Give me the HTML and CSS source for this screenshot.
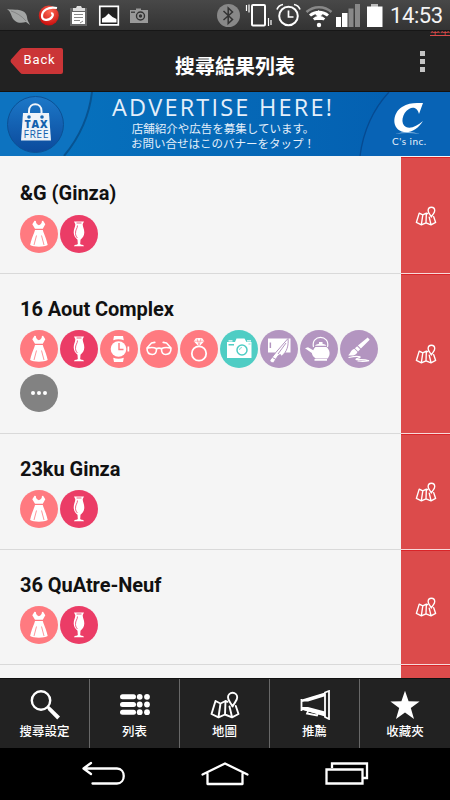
FILE: index.html
```html
<!DOCTYPE html>
<html lang="zh-Hant">
<head>
    <meta charset="UTF-8">
    <meta name="viewport" content="width=device-width, initial-scale=1.0">
    <title>搜尋結果列表</title>
    <link rel="stylesheet" href="styles.css">
</head>
<body>
    <svg class="sprite" xmlns="http://www.w3.org/2000/svg">
        <defs>
            <linearGradient id="bag-shade" x1="0" y1="0" x2="0" y2="1">
                <stop offset="0" stop-color="#1c78c8"/>
                <stop offset="1" stop-color="#0b4a9c"/>
            </linearGradient>
            <radialGradient id="ball-shade" cx=".55" cy=".3" r=".7">
                <stop offset="0" stop-color="#ff6a55"/>
                <stop offset="1" stop-color="#c70d0c"/>
            </radialGradient>
        </defs>
        <symbol id="dress" viewBox="0 0 38 38">
            <path fill="#fff" d="M14.500 5.800l-2.200 3.400 2.700 4.500h7.800l2.500-4.500-2.200-3.400-1.200.3c.2 2-1 3.300-3 4.200-2-.9-3.200-2.200-3-4.200zM15 15h7.800l.6 2c1.800 4.500 3.200 8 4.300 13-2 1.300-5 1.700-8.800 1.700s-6.800-.4-8.800-1.700c1.100-5 2.500-8.500 4.300-13z"/>
            <path fill="none" stroke="#ff7a80" stroke-width=".8" d="M16.500 20.500l-2.500 9.500M21.500 20.500l2.500 9.500"/>
        </symbol>
        <symbol id="glass" viewBox="0 0 38 38">
            <path fill="#fff" d="M14 6.500h10c-.4 1-1.200 1.800-1.300 3 .1 2.700 1.700 4.500 1.600 8 0 3.500-1.800 5.500-3.800 7.200l-.3 4.300c.6 1 3.600.6 3.800 2.200H14c.2-1.600 3.200-1.200 3.800-2.200l-.3-4.300c-2-1.700-3.800-3.700-3.800-7.200-.1-3.500 1.500-5.300 1.600-8-.1-1.200-.9-2-1.300-3z"/>
            <path fill="none" stroke="#eb3c66" stroke-width=".8" d="M16.500 8h5M17.500 10.500c0 3-2.200 4-2 8 .1 2 .9 3.500 2 4.500"/>
        </symbol>
        <symbol id="watch" viewBox="0 0 38 38">
            <path fill="#fff" d="M14 6h9l.8 4.300c-3.500-1.500-7-1.500-10.600 0zM14 32h9l.8-4.300c-3.500 1.500-7 1.500-10.600 0zM27.500 16.500h1.700v5h-1.700z"/>
            <circle cx="18.500" cy="19" r="7.800" fill="#fff"/>
            <path fill="none" stroke="#ff7a80" stroke-width="1.400" d="M19 13v6.500h4.500"/>
        </symbol>
        <symbol id="shades" viewBox="0 0 38 38">
            <path fill="none" stroke="#fff" stroke-width="1.600" stroke-linecap="round" stroke-linejoin="round" d="M7 18.300c3-1 7-1 9.300.2.700 4-1.300 6-4 6C8.500 24.500 7 22 7 18.300zM31 18.300c-3-1-7-1-9.300.2-.7 4 1.300 6 4 6 3.800 0 5.300-2.500 5.300-6.200zM16.300 19c1.600-1 3.800-1 5.400 0M7 18l4.500-5 3.300-.6M31 18l-4.500-5-3.300-.6"/>
        </symbol>
        <symbol id="ring" viewBox="0 0 38 38">
            <circle cx="19" cy="23.500" r="7.200" fill="none" stroke="#fff" stroke-width="1.800"/>
            <path fill="#fff" d="M16 8h6l2.300 3.200L19 16.800l-5.300-5.600z"/>
            <path fill="none" stroke="#ff7a80" stroke-width=".6" d="M14 11.200h10M17 8.500l2 7 2-7"/>
        </symbol>
        <symbol id="camera" viewBox="0 0 38 38">
            <path fill="#fff" d="M7 12h8l1.500-3.500h8L26.500 12H31.500v16H7zM8.500 10.200h4v1.200h-4zM27 10.200h4v1.200h-4z"/>
            <circle cx="22" cy="20" r="5" fill="#fff" stroke="#4fcdc4" stroke-width="1.500"/>
            <path fill="#4fcdc4" d="M8.500 14h5.500v1.600H8.500z"/>
            <path fill="none" stroke="#4fcdc4" stroke-width=".7" d="M19.500 20a2.500 2.500 0 0 1 2.500-2.500M28.500 14h2"/>
        </symbol>
        <symbol id="kitchen" viewBox="0 0 38 38">
            <path fill="#fff" d="M8 8.500h22.500v14H8z"/>
            <path fill="#b395c0" d="M9.600 12.500h1.500v5.500H9.600z"/>
            <path fill="#fff" stroke="#b395c0" stroke-width="1" d="M28 8.500c.8 7-1 13.500-6.600 17.800l-1-1.700-2 .8-4.500 6.800c-1 1.500-4.700-.5-3.800-2.300l5.700-7.400z"/>
            <path fill="none" stroke="#b395c0" d="M26 13l-8 11M12.500 27.500l3.500 2"/>
        </symbol>
        <symbol id="kettle" viewBox="0 0 38 38">
            <path fill="none" stroke="#fff" stroke-width="1.200" d="M13.500 17c-3-12.800 17-12.800 14 0"/>
            <path fill="#fff" d="M5 18.200l3-1 5.200 3c.5-1.200 1.200-2.400 2.200-3.300h11c3.500 2.600 4.500 7.800 1.200 11.600h-12c-2-1.500-3.300-3-3.800-5.500zM15 15.800c2-2.600 9.500-2.600 11.500 0zM19 12h3.500v2H19zM14.500 29h12.500v1.700H14.500z"/>
        </symbol>
        <symbol id="brush" viewBox="0 0 38 38">
            <path fill="#fff" d="M27.700 7.500l2 2.300-8.800 8.800-3-3zM17.200 16.300l3 3-2.100 2.200-3.200-3.200zM14.300 18.700l3.200 3.200c-1.500 3.500-4.800 4-9.500 3.300 2.500-1 2-5 6.300-6.500z"/>
            <path fill="none" stroke="#fff" stroke-width="1.200" stroke-linecap="round" d="M9 27.500c4-1 9-1.500 11-.6 1 1-4.500 1.600-4 2.600 1.500.8 6-1 13 1.200-4 .8-8 .7-11 .3"/>
        </symbol>
        <symbol id="more" viewBox="0 0 38 38">
            <g fill="#fff"><circle cx="13" cy="19" r="2"/><circle cx="19" cy="19" r="2"/><circle cx="25" cy="19" r="2"/></g>
        </symbol>
        <symbol id="map" viewBox="0 0 30 28">
            <g fill="none" stroke="#fff" stroke-width="1.900" stroke-linejoin="round" stroke-linecap="round">
                <path d="M5.500 10L1.500 23l7 3.300 6.500-2.800 7 2.800 6.500-3.300-2.700-8M5.500 10l5 2.500L15.500 10l2 .8M10.500 12.500l-2 13.500M15.500 10L15 23.500M19.500 15.500L22 26"/>
                <path d="M22.500 15.500c-1.400-3.600-4.700-5.800-4.500-9.200a4.600 4.600 0 0 1 9.200 0c.2 3.400-3.100 5.600-4.700 9.200z"/>
            </g>
            <circle cx="22.600" cy="6.300" r="1.700" fill="#222" fill-opacity="0"/>
        </symbol>
    </svg>

    <div class="phone">
        <div class="statusbar">
            <svg class="notices" viewBox="0 0 150 30">
                <path fill="#a3a5a4" d="M7 9c7 1.500 15-1 19 5 1.500 3 1 5 2 7l2 4-4-3c-5 1.500-9 1-12-2-3-3-2.500-8-7-11z"/>
                <path fill="none" stroke="#777" stroke-width=".7" d="M11 11c5 1.500 11 5 15 10"/>
                <circle cx="48.800" cy="15.500" r="10" fill="url(#ball-shade)"/>
                <path fill="none" stroke="#fff" stroke-width="2.200" d="M57 8c-9-2-15 3-15 8s7 5 10 1c1.500-2.300 1-4-1-3.500"/>
                <path fill="#666" d="M70 8h17v18H70z"/>
                <path fill="#fff" d="M72 12h13v12H72z"/>
                <path fill="#ddd" d="M73 8h3l1-2h4l1 2h3v3H73z"/>
                <path fill="none" stroke="#888" d="M74 14.500h9M74 17.500h9M74 20.500h6M80 23l3-2"/>
                <path fill="#222" stroke="#fff" stroke-width="1.700" d="M99.800 6.300h18.500v18.500H99.800z"/>
                <path fill="#fff" d="M102 22.500v-4l3-1.500 3.500-3.500 4 3.500 4 2v3.500z"/>
                <path fill="#999" d="M130 10h6V8.500h5V10h7v13h-18z"/>
                <circle cx="140.500" cy="16" r="4" fill="#999" stroke="#333" stroke-width="1.400"/>
                <circle cx="140.500" cy="16" r="1.700" fill="#333"/>
                <path fill="#444" d="M131 11.500h4v1.500h-4z"/>
            </svg>
            <div class="system">
                <svg class="signals" viewBox="215 0 170 30">
                    <circle cx="228.500" cy="15.500" r="11.500" fill="#888"/>
                    <path fill="none" stroke="#333" stroke-width="1.500" d="M223.500 11l9 8.500-4.300 4V8l4.300 4-9 8"/>
                    <g fill="none" stroke="#fff">
                        <rect x="252" y="5" width="13" height="20.500" rx="1" stroke-width="2"/>
                        <path stroke-width="1.200" d="M246.500 5v6M249 4.500v8M268.500 18v8M271 20v5"/>
                        <circle cx="288.500" cy="16" r="9.300" stroke-width="2"/>
                        <path stroke-width="1.700" d="M288.500 10.500v6.500h5M277 9.500c1-3 3-4.500 6-5M300 9.500c-1-3-3-4.500-6-5"/>
                        <path stroke="#888" stroke-width="2.500" d="M306.500 12c7-6.500 18-6.500 25 0"/>
                        <path stroke-width="3" d="M310 15.500c5-4.500 13-4.500 18 0M313.800 19.500c3-2.700 7.500-2.700 10.500 0"/>
                    </g>
                    <circle cx="319" cy="25" r="2.200" fill="#fff"/>
                    <path fill="#fff" d="M318.500 10l4 5-2 1 3 4-9 0 3-4-2-1z"/>
                    <path fill="#fff" d="M336 17h5v10h-5zM342 13h5.500v14H342z"/>
                    <path fill="#888" d="M348.500 8.500h5V27h-5zM355 4h5v23h-5z"/>
                    <path fill="#bbb" d="M371 4h7v3h-7z"/>
                    <path fill="#fff" d="M367 6.500h15.500V27H367z"/>
                </svg>
                <span class="clock">14:53</span>
            </div>
        </div>

        <header class="topbar">
            <a class="back" href="#">
                <svg viewBox="0 0 54 27"><path fill="#cb3537" d="M1 11.500L10 1.500Q11 0 13 0h38q2 0 2 2v22q0 2-2 2H13q-2 0-3-1.500L1 14.500q-1-1.500 0-3z"/></svg>
                <span>Back</span>
            </a>
            <h1>搜尋結果列表</h1>
            <div class="overflow"><i></i><i></i><i></i></div>
            <span class="stray">本本</span>
        </header>

        <div class="banner">
            <svg class="banner-bg" viewBox="0 0 450 64">
                <path fill="#0d73c0" d="M0 0h92Q88 35 64 64H0z"/>
                <path fill="none" stroke="#075391" stroke-width="2" d="M92 0Q88 35 64 64"/>
                <path fill="#0863b5" d="M389 0Q365 26 360 64h90V0z"/>
                <path fill="none" stroke="#064a91" stroke-width="1.300" d="M389 0Q365 26 360 64"/>
                <circle cx="35.500" cy="32.500" r="28" fill="url(#bag-shade)" stroke="#0b5195"/>
                <path fill="none" stroke="#f1f5fa" stroke-width="2" d="M29 24v-5c0-9 12.500-9 12.500 0v5"/>
                <path fill="#eef3f9" d="M23 21h26l2 27.500H21z"/>
                <circle cx="29" cy="25" r="1.800" fill="#1766b2"/>
                <circle cx="42" cy="25" r="1.800" fill="#1766b2"/>
                <text class="tax" x="36" y="36.300" textLength="23">TAX</text>
                <text class="free" x="36" y="45.500" textLength="25">FREE</text>
                <path fill="#fff" d="M423 11l-4 11c-1-5-5-8-10-5-7 4-9 15-3 18 5 2 11-1 17-6-5 8-12 12-19 11-13-2-12-19-2-25 7-5 14-4 21-4z"/>
                <path fill="#9cc4e7" d="M395 42q13-4 25 0-13-2-25 0z"/>
            </svg>
            <div class="banner-copy">
                <strong>ADVERTISE HERE!</strong>
                <span lang="ja">店舗紹介や広告を募集しています。</span>
                <span lang="ja">お問い合せはこのバナーをタップ！</span>
            </div>
            <span class="brand">C's inc.</span>
        </div>

        <main class="results">
            <article class="shop first">
                <div class="info">
                    <h2>&amp;G (Ginza)</h2>
                    <div class="tags">
                        <svg class="pink"><use href="#dress"/></svg>
                        <svg class="rose"><use href="#glass"/></svg>
                    </div>
                </div>
                <a class="locate" href="#"><svg><use href="#map"/></svg></a>
            </article>
            <article class="shop tall">
                <div class="info">
                    <h2>16 Aout Complex</h2>
                    <div class="tags">
                        <svg class="pink"><use href="#dress"/></svg>
                        <svg class="rose"><use href="#glass"/></svg>
                        <svg class="pink"><use href="#watch"/></svg>
                        <svg class="pink"><use href="#shades"/></svg>
                        <svg class="pink"><use href="#ring"/></svg>
                        <svg class="teal"><use href="#camera"/></svg>
                        <svg class="purple"><use href="#kitchen"/></svg>
                        <svg class="purple"><use href="#kettle"/></svg>
                        <svg class="purple"><use href="#brush"/></svg>
                        <svg class="gray"><use href="#more"/></svg>
                    </div>
                </div>
                <a class="locate" href="#"><svg><use href="#map"/></svg></a>
            </article>
            <article class="shop">
                <div class="info">
                    <h2>23ku Ginza</h2>
                    <div class="tags">
                        <svg class="pink"><use href="#dress"/></svg>
                        <svg class="rose"><use href="#glass"/></svg>
                    </div>
                </div>
                <a class="locate" href="#"><svg><use href="#map"/></svg></a>
            </article>
            <article class="shop">
                <div class="info">
                    <h2>36 QuAtre-Neuf</h2>
                    <div class="tags">
                        <svg class="pink"><use href="#dress"/></svg>
                        <svg class="rose"><use href="#glass"/></svg>
                    </div>
                </div>
                <a class="locate" href="#"><svg><use href="#map"/></svg></a>
            </article>
            <article class="shop">
                <div class="info"></div>
                <a class="locate" href="#"></a>
            </article>
        </main>

        <nav class="tabs">
            <a href="#">
                <svg viewBox="0 0 30 30"><circle cx="11" cy="10.500" r="9.200" fill="none" stroke="#fff" stroke-width="2.400"/><path fill="#fff" d="M17 18l2-2 2 1.800 9 8.800-2.800 3-8.800-9z"/></svg>
                <span>搜尋設定</span>
            </a>
            <a href="#">
                <svg viewBox="0 0 30 30"><g fill="#fff"><rect y="4.300" width="16" height="5" rx="2.500"/><rect y="12" width="16" height="5" rx="2.500"/><rect y="19.700" width="16" height="5" rx="2.500"/><circle cx="19.700" cy="6.800" r="2.900"/><circle cx="27" cy="6.800" r="2.900"/><circle cx="19.700" cy="14.500" r="2.900"/><circle cx="27" cy="14.500" r="2.900"/><circle cx="19.700" cy="22.200" r="2.900"/><circle cx="27" cy="22.200" r="2.900"/></g></svg>
                <span>列表</span>
            </a>
            <a href="#">
                <svg><use href="#map"/></svg>
                <span>地圖</span>
            </a>
            <a href="#">
                <svg viewBox="0 0 30 30"><g fill="none" stroke="#fff" stroke-width="1.800"><path d="M1.500 9v12M2 11l23-7M2 19l23 6M8 21l-1 2.500 10 2 1-2.500"/><path d="M25 2.500l4-1.500v28L25 27z"/></g><path fill="#fff" d="M2 9.500l23-7v3.700L8 11.500H2zM2 17h6l17 4.500v5L2 19.500z"/></svg>
                <span>推薦</span>
            </a>
            <a href="#">
                <svg viewBox="0 0 30 30"><path fill="#fff" d="M15 .8l3.600 10.400 11 .2-8.800 6.700 3.200 10.900L15 22.600 6 29l3.200-10.900-8.800-6.700 11-.2z"/></svg>
                <span>收藏夾</span>
            </a>
        </nav>

        <div class="navkeys">
            <svg viewBox="0 0 450 52">
                <g fill="none" stroke="#fff" stroke-width="2.300" stroke-linecap="round" stroke-linejoin="round">
                    <path d="M91 15l-7.500 5.500L91 26M84 20.500h33c9 0 9 15 0 15H92.500"/>
                    <path d="M202.500 26.500L225 15.500l22.500 11M207.500 26v10h35V26"/>
                    <path stroke-linejoin="miter" stroke-linecap="butt" d="M326.500 21.500h36v14h-36zM332 20v-4.500h35V30h-4"/>
                </g>
            </svg>
        </div>
    </div>
</body>
</html>
```
FILE: styles.css
```css
* {
    margin: 0;
    padding: 0;
    box-sizing: border-box;
}

body {
    font-family: Roboto, "Noto Sans CJK TC", sans-serif;
    background: #000;
    overflow: hidden;
}

a {
    color: inherit;
    text-decoration: none;
}

.sprite {
    position: absolute;
    width: 0;
    height: 0;
}

.phone {
    display: flex;
    flex-direction: column;
    width: 450px;
    height: 800px;
}

.statusbar {
    display: flex;
    justify-content: space-between;
    height: 31px;
    background: linear-gradient(#484848, #333);
    border-bottom: 1px solid #171717;
}

.notices {
    width: 150px;
    height: 30px;
}

.system {
    display: flex;
    align-items: center;
    width: 235px;
}

.signals {
    width: 170px;
    height: 30px;
}

.clock {
    margin-left: 5px;
    padding-top: 2px;
    font-size: 22px;
    line-height: 28px;
    letter-spacing: -0.4px;
    color: #f4f4f4;
}

.topbar {
    position: relative;
    display: grid;
    grid-template-columns: 64px 1fr 64px;
    align-items: center;
    height: 61px;
    background: #222;
    border-bottom: 1px solid #16120f;
    color: #fff;
}

.back {
    display: grid;
    width: 54px;
    height: 27px;
    margin-left: 10px;
    place-items: center;
}

.back svg,
.back span {
    grid-area: 1 / 1;
}

.back svg {
    width: 54px;
    height: 27px;
}

.back span {
    padding: 0 0 3px 5px;
    font-size: 13px;
    letter-spacing: 0.8px;
}

.topbar h1 {
    padding: 12px 0 0 20px;
    font-size: 20px;
    line-height: 28px;
    text-align: center;
}

.overflow {
    display: grid;
    gap: 3px;
    margin-left: 34px;
}

.overflow i {
    width: 5px;
    height: 5px;
    background: #c4c4c4;
}

.stray {
    position: absolute;
    top: 0;
    right: 0;
    height: 5px;
    overflow: hidden;
    border-bottom: 1px solid #dc4b4b;
    font-size: 10px;
    line-height: 0;
    color: #dc4b4b;
}

.banner {
    display: grid;
    grid-template-columns: 92px 257px 1fr;
    height: 64px;
    background: linear-gradient(90deg, #0774bf, #035daf);
    color: #e4effa;
}

.banner > * {
    grid-row: 1;
}

.banner-bg {
    grid-column: 1 / -1;
    width: 450px;
    height: 64px;
}

.tax,
.free {
    font-family: "Open Sans", sans-serif;
    font-size: 10.5px;
    text-anchor: middle;
    fill: #1462ae;
}

.tax {
    font-weight: 800;
}

.banner-copy {
    display: flex;
    flex-direction: column;
    grid-column: 2;
    align-items: center;
    padding-left: 5px;
    font-family: "Noto Sans CJK JP", sans-serif;
    white-space: nowrap;
}

.banner-copy strong {
    padding-top: 1px;
    font-family: "Open Sans", sans-serif;
    font-size: 23.5px;
    font-weight: 400;
    line-height: 28px;
    letter-spacing: 2.2px;
}

.banner-copy span {
    font-size: 11.5px;
    line-height: 15px;
}

.brand {
    grid-column: 3;
    align-self: end;
    padding: 0 0 8px 43px;
    font-family: Lato, sans-serif;
    font-size: 10px;
    line-height: 14px;
    letter-spacing: 0.5px;
}

.results {
    flex: 1;
    overflow: hidden;
    background: #f5f5f5;
    border-top: 1px solid #f5f5f5;
}

.shop {
    display: grid;
    grid-template-columns: 1fr 49px;
    height: 115.5px;
}

.shop.first {
    height: 117px;
}

.shop.tall {
    height: 160px;
}

.info {
    padding: 20px 0 0 20px;
    border-bottom: 1px solid #d9d9d9;
}

.first .info {
    padding-top: 21px;
}

.shop h2 {
    margin-bottom: 6px;
    font-size: 20px;
    font-weight: 700;
    line-height: 30px;
    letter-spacing: -0.05px;
    color: #111;
}

.first h2 {
    margin-bottom: 7px;
}

.tags {
    display: flex;
    flex-wrap: wrap;
    gap: 6px 2px;
}

.tags svg {
    width: 38px;
    height: 38px;
    border-radius: 50%;
}

.pink {
    background: #ff7a80;
}

.rose {
    background: #eb3c66;
}

.teal {
    background: #4fcdc4;
}

.purple {
    background: #b395c0;
}

.gray {
    background: #828282;
}

.locate {
    display: grid;
    place-items: center;
    background: #dc4b4b;
    border-top: 1px solid #d92428;
    border-bottom: 1px solid #f7dada;
}

.locate svg {
    width: 22px;
    height: 20px;
}

.tabs {
    display: grid;
    grid-template-columns: repeat(5, 1fr);
    height: 70px;
    background: #222;
    border-top: 1px solid #111;
    color: #fff;
}

.tabs a {
    display: flex;
    flex-direction: column;
    align-items: center;
    padding-top: 11px;
    border-right: 1px solid #686868;
}

.tabs a:last-child {
    border-right: 0;
}

.tabs svg {
    width: 30px;
    height: 30px;
}

.tabs span {
    margin-top: 2px;
    font-size: 12.5px;
    font-weight: 500;
    line-height: 20px;
}

.navkeys {
    height: 52px;
}

.navkeys svg {
    width: 450px;
    height: 52px;
}
```
